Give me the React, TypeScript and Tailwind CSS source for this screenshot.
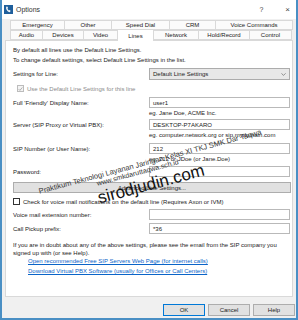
import type { ReactNode } from "react";

const font = { fontFamily: '"Liberation Sans", Arial, sans-serif' };

function Tab({ label, w, selected }: { label: string; w: string; selected?: boolean }) {
  return (
    <div
      className={
        selected
          ? `${w} -mt-[2px] -mb-px flex h-[12px] items-center justify-center border border-b-0 border-[#d9d9d9] bg-white z-10`
          : `${w} -ml-px flex h-[10px] items-center justify-center border border-[#d9d9d9] bg-[#fbfbfb]`
      }
    >
      {label}
    </div>
  );
}

function Input({ value, className = "" }: { value?: string; className?: string }) {
  return (
    <div className={`flex h-[11px] w-[141px] items-center border border-[#b9b9b9] bg-white px-[3px] ${className}`}>
      {value}
    </div>
  );
}

function Row({ label, children, className = "" }: { label: string; children: ReactNode; className?: string }) {
  return (
    <div className={`flex items-center justify-between ${className}`}>
      <span>{label}</span>
      {children}
    </div>
  );
}

function Check({ checked, disabled }: { checked?: boolean; disabled?: boolean }) {
  return (
    <span
      className={`mr-[3px] flex h-[7px] w-[7px] items-center justify-center border ${
        disabled ? "border-[#bcbcbc] bg-[#f4f4f4]" : "border-[#333] bg-white"
      }`}
    >
      {checked && (
        <svg viewBox="0 0 8 8" className="h-[6px] w-[6px]">
          <path d="M1 4.2 L3 6.2 L7 1.5" fill="none" stroke="#9a9a9a" strokeWidth="1.2" />
        </svg>
      )}
    </span>
  );
}

function Btn({ label, primary }: { label: string; primary?: boolean }) {
  return (
    <div
      className={`flex h-[12px] w-[42px] items-center justify-center border bg-[#e1e1e1] ${
        primary ? "border-[#0078d7]" : "border-[#adadad]"
      }`}
    >
      {label}
    </div>
  );
}

export default function App() {
  return (
    <div
      className="relative flex h-[320px] w-[298px] flex-col overflow-hidden border-x-2 border-b-2 border-[#4a8fc4] bg-[#f0f0f0] text-[6px] leading-none text-[#222]"
      style={font}
    >
      {/* title bar */}
      <div className="flex h-[19px] items-center bg-white pl-[2px] pr-[6px]">
        <svg viewBox="0 0 10 10" className="h-[9px] w-[9px]">
          <rect x="0" y="0" width="10" height="10" fill="#1f5f9c" />
          <path d="M2.5 2 C1.8 4 3 7 6 8 L7.5 6.8 L6.2 5.6 L5.4 6.2 C4.5 5.6 4 4.8 3.8 4 L4.5 3.3 L3.6 1.8 Z" fill="#fff" />
        </svg>
        <span className="ml-[3px] text-[7px] text-[#333]">Options</span>
        <span className="ml-auto text-[7px] text-[#444]">?</span>
        <span className="ml-[22px] text-[8px] text-[#444]">×</span>
      </div>

      {/* tabs */}
      <div className="ml-[8px] mt-px flex">
        <Tab label="Emergency" w="w-[55px] ml-0" />
        <Tab label="Other" w="w-[48px]" />
        <Tab label="Speed Dial" w="w-[59px]" />
        <Tab label="CRM" w="w-[47px]" />
        <Tab label="Voice Commands" w="w-[78px]" />
      </div>
      <div className="ml-[8px] flex items-end">
        <Tab label="Audio" w="w-[33px] ml-0" />
        <Tab label="Devices" w="w-[42px]" />
        <Tab label="Video" w="w-[35px]" />
        <Tab label="Lines" w="w-[37px] -ml-px" selected />
        <Tab label="Network" w="w-[46px]" />
        <Tab label="Hold/Record" w="w-[52px]" />
        <Tab label="Control" w="w-[43px]" />
      </div>

      {/* panel */}
      <div className="mx-[3px] flex h-[257px] flex-col border border-[#d9d9d9] bg-white pl-[7px] pr-[2px] pt-[6px]">
        <p>By default all lines use the Default Line Settings.</p>
        <p className="mt-[4px]">To change default settings, select Default Line Settings in the list.</p>

        <Row label="Settings for Line:" className="mt-[5px]">
          <div className="flex h-[12px] w-[141px] items-center justify-between border border-[#acacac] bg-[#e8e8e8] px-[3px]">
            <span>Default Line Settings</span>
            <svg viewBox="0 0 8 5" className="h-[3px] w-[5px]">
              <path d="M0.5 0.5 L4 4 L7.5 0.5" fill="none" stroke="#555" strokeWidth="1" />
            </svg>
          </div>
        </Row>

        <div className="ml-[4px] mt-[5px] flex items-center text-[#8a8a8a]">
          <Check checked disabled />
          Use the Default Line Settings for this line
        </div>

        <Row label="Full 'Friendly' Display Name:" className="mt-[5px]">
          <Input value="user1" />
        </Row>
        <p className="ml-[136px] mt-[2px] whitespace-nowrap">eg. Jane Doe, ACME Inc.</p>

        <Row label="Server (SIP Proxy or Virtual PBX):" className="mt-[3px]">
          <Input value="DESKTOP-P7AKARO" />
        </Row>
        <p className="ml-[136px] mt-[2px] whitespace-nowrap">eg. computer.network.org or sip.mydomain.com</p>

        <Row label="SIP Number (or User Name):" className="mt-[5px]">
          <Input value="212" />
        </Row>
        <p className="ml-[136px] mt-[2px] whitespace-nowrap">eg. 212 or JDoe (or Jane.Doe)</p>

        <Row label="Password:" className="mt-[4px]">
          <Input />
        </Row>

        <div className="mt-[5px] flex h-[11px] w-[278px] items-center justify-center border border-[#adadad] bg-[#e1e1e1]">
          Advanced Line Settings...
        </div>

        <div className="mt-[5px] flex items-center">
          <Check />
          Check for voice mail notifications on the default line (Requires Axon or IVM)
        </div>

        <Row label="Voice mail extension number:" className="mt-[4px]">
          <Input />
        </Row>
        <Row label="Call Pickup prefix:" className="mt-[3px]">
          <Input value="*36" />
        </Row>

        <p className="mt-[8px] whitespace-nowrap">
          If you are in doubt about any of the above settings, please see the email from the SIP company you
        </p>
        <p className="mt-[2px]">signed up with (or see Help).</p>
        <p className="ml-[15px] mt-[2px] text-[#0a64c8] underline">
          Open recommended Free SIP Servers Web Page (for internet calls)
        </p>
        <p className="ml-[15px] mt-[4px] text-[#0a64c8] underline">
          Download Virtual PBX Software (usually for Offices or Call Centers)
        </p>
      </div>

      {/* footer */}
      <div className="mr-[1px] mt-[7px] flex justify-end gap-[3px]">
        <Btn label="OK" primary />
        <Btn label="Cancel" />
        <Btn label="Help" />
      </div>

      {/* watermark */}
      <div className="pointer-events-none absolute left-[36px] top-[188px] origin-top-left -rotate-[15deg] whitespace-nowrap text-[7.5px] text-[#333]">
        Praktikum Teknologi Layanan Jaringan Kelas XI TKJ SMK Dar Taqwa
      </div>
      <div className="pointer-events-none absolute left-[94px] top-[180px] origin-top-left -rotate-[15deg] whitespace-nowrap text-[7px] text-[#333]">
        www.smkdaruttaqwa.sch.id
      </div>
      <div className="pointer-events-none absolute left-[94px] top-[190px] origin-top-left -rotate-[15deg] whitespace-nowrap text-[17px] text-[#111]">
        sirodjudin.com
      </div>
    </div>
  );
}
